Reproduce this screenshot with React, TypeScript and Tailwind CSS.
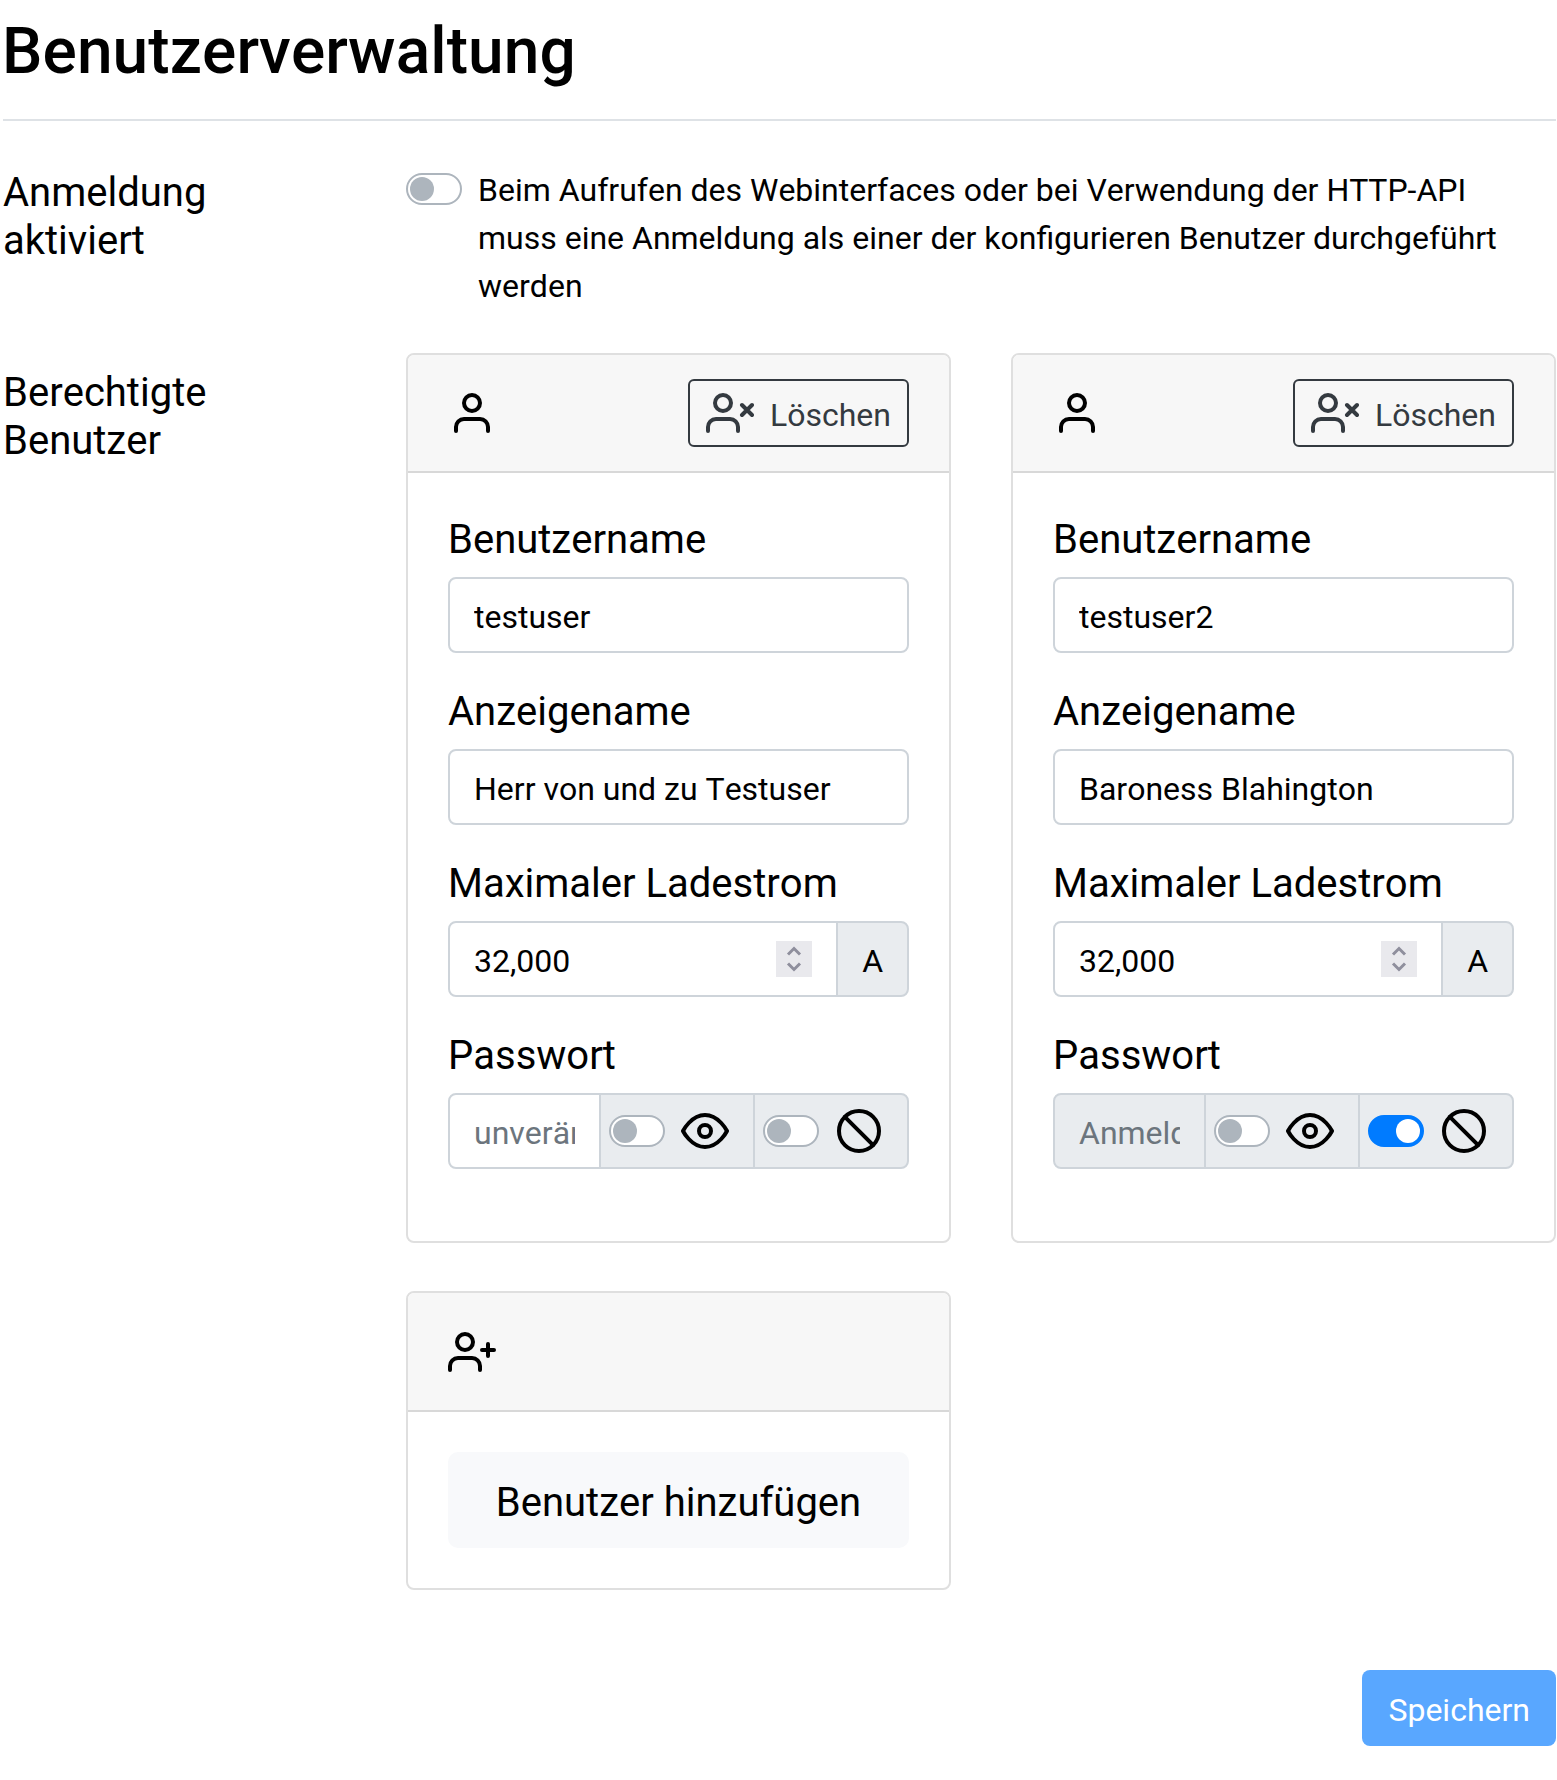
import React from "react";

function Svg({ children, className = "" }: { children: React.ReactNode; className?: string }) {
  return (
    <svg
      viewBox="0 0 24 24"
      fill="none"
      stroke="currentColor"
      strokeWidth="2"
      strokeLinecap="round"
      strokeLinejoin="round"
      className={`size-12 shrink-0 ${className}`}
    >
      {children}
    </svg>
  );
}

const UserIcon = () => (
  <Svg>
    <path d="M20 21v-2a4 4 0 0 0-4-4H8a4 4 0 0 0-4 4v2" />
    <circle cx="12" cy="7" r="4" />
  </Svg>
);

const UserXIcon = () => (
  <Svg>
    <path d="M16 21v-2a4 4 0 0 0-4-4H5a4 4 0 0 0-4 4v2" />
    <circle cx="8.5" cy="7" r="4" />
    <path d="M18 8l5 5M23 8l-5 5" />
  </Svg>
);

const UserPlusIcon = () => (
  <Svg>
    <path d="M16 21v-2a4 4 0 0 0-4-4H5a4 4 0 0 0-4 4v2" />
    <circle cx="8.5" cy="7" r="4" />
    <path d="M20 8v6M23 11h-6" />
  </Svg>
);

const EyeIcon = () => (
  <Svg className="ml-4">
    <path d="M1 12s4-8 11-8 11 8 11 8-4 8-11 8-11-8-11-8z" />
    <circle cx="12" cy="12" r="3" />
  </Svg>
);

const SlashIcon = () => (
  <Svg className="ml-4">
    <circle cx="12" cy="12" r="10" />
    <path d="M4.93 4.93l14.14 14.14" />
  </Svg>
);

function Toggle({ on = false }: { on?: boolean }) {
  return (
    <span
      role="switch"
      aria-checked={on}
      className={`flex h-8 w-14 shrink-0 items-center rounded-full border-2 px-0.5 ${
        on ? "justify-end border-[#007bff] bg-[#007bff]" : "border-[#adb5bd] bg-white"
      }`}
    >
      <span className={`size-6 rounded-full ${on ? "bg-white" : "bg-[#adb5bd]"}`} />
    </span>
  );
}

const boxBase = "h-[76px] min-w-0 border-2 border-[#ced4da] px-6 pt-1 text-[32px] leading-[48px] outline-none";

function Field({ label, children }: { label: string; children: React.ReactNode }) {
  return (
    <div className="mb-8">
      <div className="mb-[13px] pt-[3px] text-[40px] leading-[48px]">{label}</div>
      <div className="flex">{children}</div>
    </div>
  );
}

function Addon({ children }: { children: React.ReactNode }) {
  return (
    <div className="-ml-0.5 flex h-[76px] shrink-0 items-center border-2 border-[#ced4da] bg-[#e9ecef] pr-6 pl-2 last:rounded-r-lg">
      {children}
    </div>
  );
}

function Spinner() {
  return (
    <div className="flex h-9 w-9 shrink-0 items-center justify-center bg-[#e9e9ed] text-[#8f8f9d]">
      <svg viewBox="0 0 36 36" className="size-9" fill="none" stroke="currentColor" strokeWidth="3">
        <path d="M12 13.5l6-6 6 6M12 22.5l6 6 6-6" />
      </svg>
    </div>
  );
}

const cardClass = "rounded-lg border-2 border-[#dfdfdf]";

interface User {
  name: string;
  display: string;
  placeholder: string;
  noPassword: boolean;
}

function UserCard({ user }: { user: User }) {
  return (
    <div className={`${cardClass} h-[890px]`}>
      <div className="flex h-[118px] items-center justify-between rounded-t-md border-b-2 border-[#d8d8d8] bg-[#f7f7f7] px-10">
        <UserIcon />
        <button className="flex h-[68px] items-center rounded-md border-2 border-[#343a40] px-4 text-[32px] leading-[48px] text-[#343a40]">
          <UserXIcon />
          <span className="ml-4 pt-1">Löschen</span>
        </button>
      </div>
      <div className="px-10 pt-10">
        <Field label="Benutzername">
          <input className={`${boxBase} w-full rounded-lg`} defaultValue={user.name} />
        </Field>
        <Field label="Anzeigename">
          <input className={`${boxBase} w-full rounded-lg`} defaultValue={user.display} />
        </Field>
        <Field label="Maximaler Ladestrom">
          <div className="flex h-[76px] min-w-0 flex-1 items-center rounded-l-lg border-2 border-[#ced4da] px-6">
            <input className="min-w-0 flex-1 pt-1 text-[32px] leading-[48px] outline-none" defaultValue="32,000" />
            <Spinner />
          </div>
          <div className="-ml-0.5 flex h-[76px] items-center rounded-r-lg border-2 border-[#ced4da] bg-[#e9ecef] px-6 pt-1 text-[32px] leading-[48px]">
            A
          </div>
        </Field>
        <Field label="Passwort">
          <input
            className={`${boxBase} flex-1 rounded-l-lg placeholder:text-[#6c757d] disabled:bg-[#e9ecef]`}
            placeholder={user.placeholder}
            disabled={user.noPassword}
          />
          <Addon>
            <Toggle />
            <EyeIcon />
          </Addon>
          <Addon>
            <Toggle on={user.noPassword} />
            <SlashIcon />
          </Addon>
        </Field>
      </div>
    </div>
  );
}

const users: User[] = [
  { name: "testuser", display: "Herr von und zu Testuser", placeholder: "unverändert", noPassword: false },
  { name: "testuser2", display: "Baroness Blahington", placeholder: "Anmeldung deaktiviert", noPassword: true },
];

export default function App() {
  return (
    <div className="h-[1780px] overflow-hidden bg-white pr-px pl-[3px] font-['Roboto',sans-serif] text-black [font-kerning:none]">
      <h1 className="-ml-px h-[119px] pt-[13px] text-[64px] leading-[77px] font-medium tracking-[0.1px]">
        Benutzerverwaltung
      </h1>
      <div className="h-0.5 bg-[#dee2e6]" />

      <div className="mt-[45px] flex">
        <div className="w-[403px] shrink-0 pt-[3px] pr-[120px] text-[40px] leading-[48px]">Anmeldung aktiviert</div>
        <div className="flex">
          <div className="pt-[7px]">
            <Toggle />
          </div>
          <p className="ml-4 pr-10 text-[32px] leading-[48px]">
            Beim Aufrufen des Webinterfaces oder bei Verwendung der HTTP-API muss eine Anmeldung als einer der
            konfigurieren Benutzer durchgeführt werden
          </p>
        </div>
      </div>

      <div className="mt-[43px] flex">
        <div className="w-[403px] shrink-0 pt-4 pr-[120px] text-[40px] leading-[48px]">Berechtigte Benutzer</div>
        <div className="grid flex-1 grid-cols-[545px_545px] items-start gap-x-[60px] gap-y-12">
          {users.map((u) => (
            <UserCard key={u.name} user={u} />
          ))}
          <div className={cardClass}>
            <div className="flex h-[119px] items-center rounded-t-md border-b-2 border-[#d8d8d8] bg-[#f7f7f7] px-10">
              <UserPlusIcon />
            </div>
            <div className="p-10">
              <button className="block h-24 w-full rounded-[10px] bg-[#f8f9fb] pt-1.5 text-[40px] leading-[60px]">
                Benutzer hinzufügen
              </button>
            </div>
          </div>
        </div>
      </div>

      <div className="mt-20 flex justify-end">
        <button className="h-[76px] rounded-lg bg-[#59a7ff] px-[26px] pt-1 text-[32px] leading-[48px] text-white">
          Speichern
        </button>
      </div>
    </div>
  );
}
